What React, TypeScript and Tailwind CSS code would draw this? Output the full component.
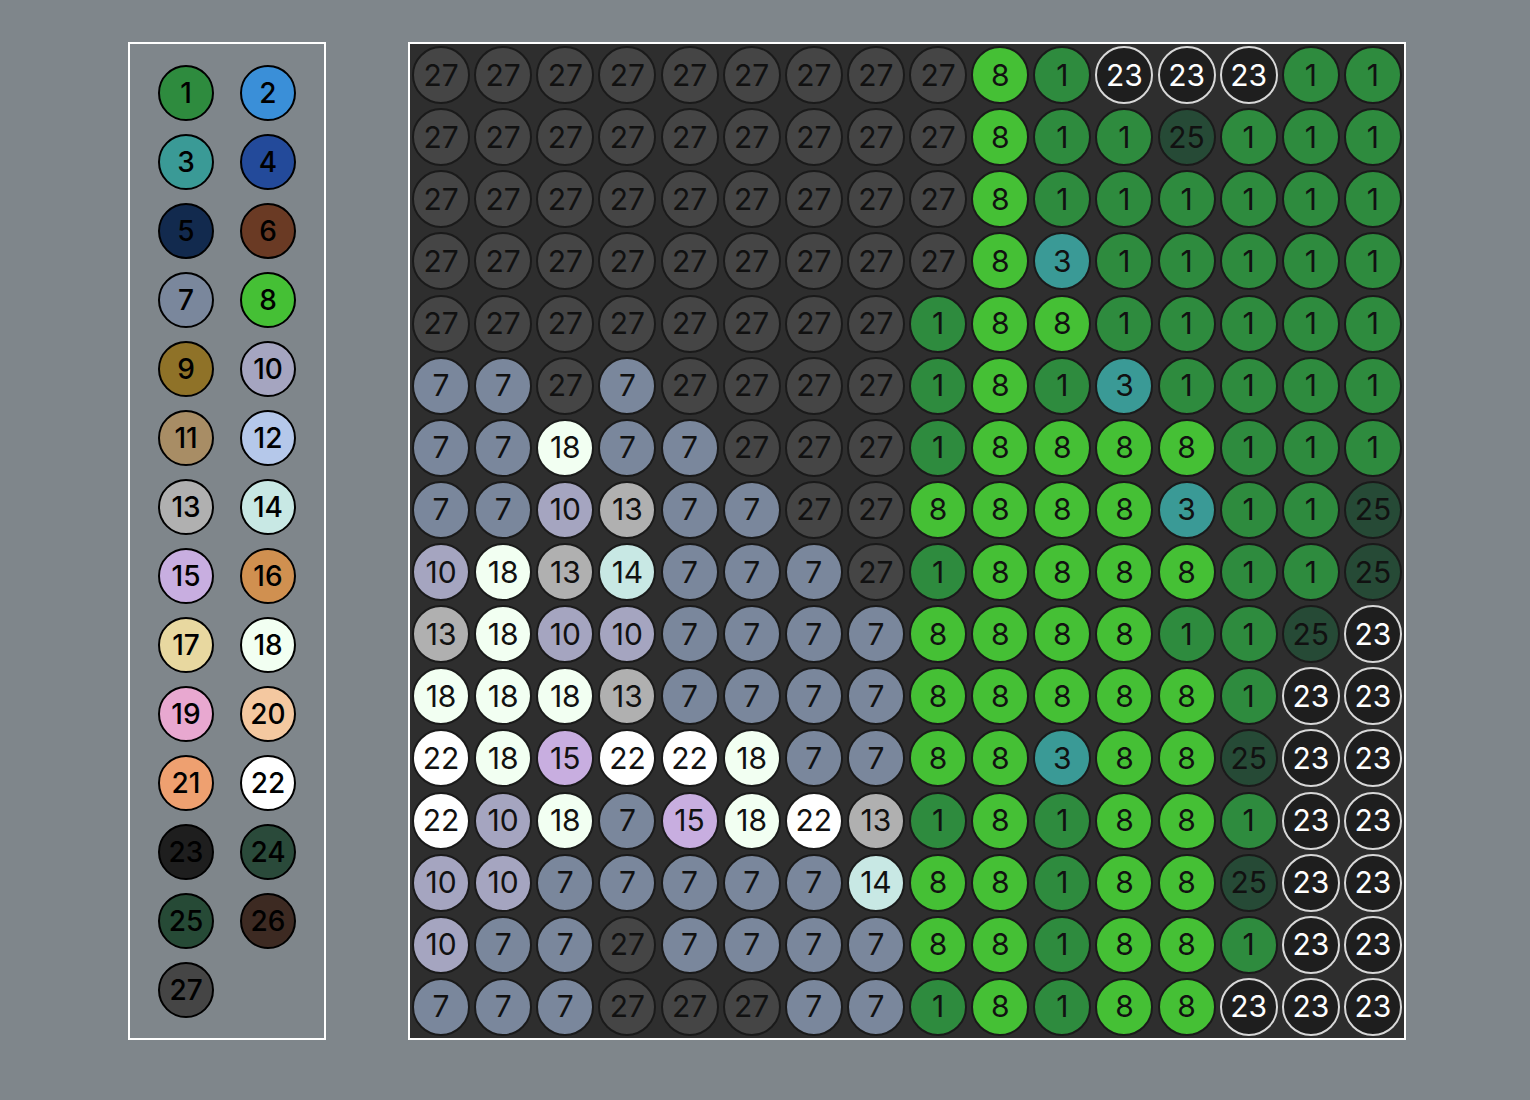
const colors: Record<number, string> = {
  1: "#2e8b3e", 2: "#3a8fd8", 3: "#3a9a96", 4: "#234a9a", 5: "#122a4e", 6: "#6a3a24",
  7: "#7a879c", 8: "#45c035", 9: "#8f7228", 10: "#a5a5c0", 11: "#a88d65", 12: "#b5c8ea",
  13: "#b0b0b0", 14: "#c8e8e4", 15: "#c8aee0", 16: "#d09050", 17: "#e8d8a0", 18: "#f2fff2",
  19: "#e8a8d0", 20: "#f4c8a0", 21: "#eea070", 22: "#ffffff", 23: "#1e1e1e", 24: "#2a4a3a",
  25: "#264a36", 26: "#3d2a22", 27: "#454545",
};

const rows: number[][] = [
  [27, 27, 27, 27, 27, 27, 27, 27, 27, 8, 1, 23, 23, 23, 1, 1],
  [27, 27, 27, 27, 27, 27, 27, 27, 27, 8, 1, 1, 25, 1, 1, 1],
  [27, 27, 27, 27, 27, 27, 27, 27, 27, 8, 1, 1, 1, 1, 1, 1],
  [27, 27, 27, 27, 27, 27, 27, 27, 27, 8, 3, 1, 1, 1, 1, 1],
  [27, 27, 27, 27, 27, 27, 27, 27, 1, 8, 8, 1, 1, 1, 1, 1],
  [7, 7, 27, 7, 27, 27, 27, 27, 1, 8, 1, 3, 1, 1, 1, 1],
  [7, 7, 18, 7, 7, 27, 27, 27, 1, 8, 8, 8, 8, 1, 1, 1],
  [7, 7, 10, 13, 7, 7, 27, 27, 8, 8, 8, 8, 3, 1, 1, 25],
  [10, 18, 13, 14, 7, 7, 7, 27, 1, 8, 8, 8, 8, 1, 1, 25],
  [13, 18, 10, 10, 7, 7, 7, 7, 8, 8, 8, 8, 1, 1, 25, 23],
  [18, 18, 18, 13, 7, 7, 7, 7, 8, 8, 8, 8, 8, 1, 23, 23],
  [22, 18, 15, 22, 22, 18, 7, 7, 8, 8, 3, 8, 8, 25, 23, 23],
  [22, 10, 18, 7, 15, 18, 22, 13, 1, 8, 1, 8, 8, 1, 23, 23],
  [10, 10, 7, 7, 7, 7, 7, 14, 8, 8, 1, 8, 8, 25, 23, 23],
  [10, 7, 7, 27, 7, 7, 7, 7, 8, 8, 1, 8, 8, 1, 23, 23],
  [7, 7, 7, 27, 27, 27, 7, 7, 1, 8, 1, 8, 8, 23, 23, 23],
];

const font = { fontFamily: "Inter, 'Noto Sans', sans-serif" };

const App = () => {
  return (
    <div className="min-h-[1100px] w-full bg-[#7f868b] flex gap-[82px] pl-[128px] pt-[42px]" style={font}>
      <div className="w-[198px] h-[998px] border-2 border-white pl-[28px] pt-[21px]">
        <div className="grid grid-cols-[56px_56px] gap-x-[26px] gap-y-[13px]">
          {Array.from({ length: 27 }).map((_, i) => (
            <div
              key={i}
              className="w-[56px] h-[56px] rounded-full border-2 border-black flex items-center justify-center text-[28px] font-medium text-black"
              style={{ backgroundColor: colors[i + 1] }}
            >
              {i + 1}
            </div>
          ))}
        </div>
      </div>
      <div className="w-[998px] h-[998px] border-2 border-white bg-[#2e2e2e]">
        <div className="grid grid-cols-16 grid-rows-16 w-full h-full">
          {rows.flat().map((n, i) => (
            <div key={i} className="flex items-center justify-center">
              <div
                className={
                  "w-[58px] h-[58px] rounded-full border-2 flex items-center justify-center text-[30px] " +
                  (n === 23 ? "border-[#d8d8d8] text-white" : "border-[#1a1a1a] text-[#111]")
                }
                style={{ backgroundColor: colors[n] }}
              >
                {n}
              </div>
            </div>
          ))}
        </div>
      </div>
    </div>
  );
};

export default App;
